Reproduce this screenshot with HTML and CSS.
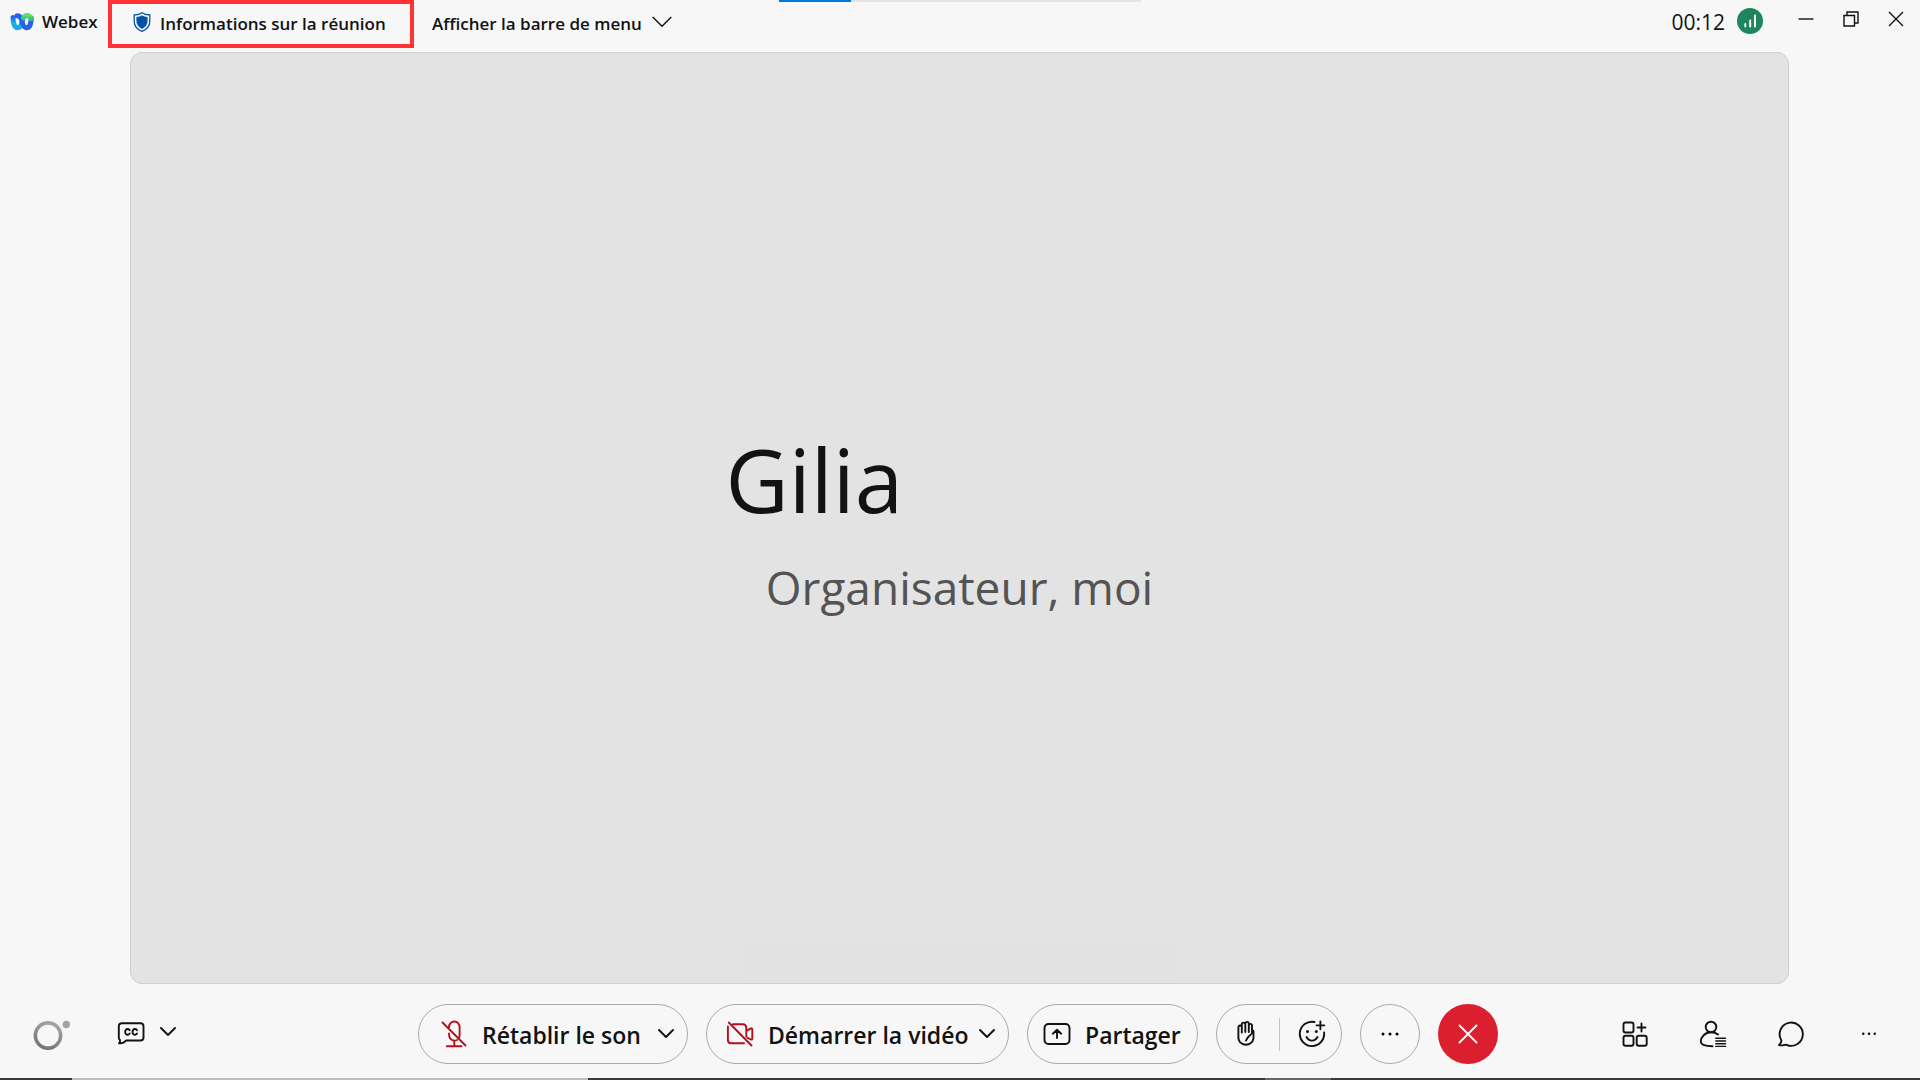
FILE: index.html
```
<!DOCTYPE html>
<html lang="fr">
<head>
    <meta charset="UTF-8">
    <meta name="viewport" content="width=device-width, initial-scale=1.0">
    <title>Webex</title>
    <link rel="stylesheet" href="styles.css">
</head>
<body>
    <div class="progress"><span class="progress-done"></span></div>

    <header>
        <div class="brand">
            <svg class="logo" width="24" height="20" viewBox="0 0 24 20">
                <defs>
                    <linearGradient id="gLeft" x1="0" y1="0" x2="0" y2="1">
                        <stop offset="0" stop-color="#2b62f0"/>
                        <stop offset="0.5" stop-color="#12b4e4"/>
                        <stop offset="1" stop-color="#22a8ee"/>
                    </linearGradient>
                    <linearGradient id="gRight" x1="0" y1="0" x2="0" y2="1">
                        <stop offset="0" stop-color="#5fe05f"/>
                        <stop offset="1" stop-color="#3cc47a"/>
                    </linearGradient>
                </defs>
                <path d="M3 5.500C3 11.500 4.800 15.800 7.600 15.800S12 11 12.500 8" fill="none" stroke="url(#gLeft)" stroke-width="5" stroke-linecap="round"/>
                <path d="M21.200 6C21.200 12 19.400 15.800 16.500 15.800S12.500 12 11.500 7.500C10.800 4.600 9.500 3.700 7 3.700" fill="none" stroke="#2660ee" stroke-width="5" stroke-linecap="round"/>
                <path d="M13.500 6C14.500 4 15.500 3.500 17 3.500S20.300 4.500 20.900 6.500" fill="none" stroke="url(#gRight)" stroke-width="5" stroke-linecap="round"/>
            </svg>
            <span>Webex</span>
        </div>
        <button class="meeting-info">
            <svg width="18" height="20" viewBox="0 0 18 20">
                <path d="M9 0.800C11 2.400 13.500 3 16.800 3V9C16.800 14 13.500 17.500 9 19.400C4.500 17.500 1.200 14 1.200 9V3C4.500 3 7 2.400 9 0.800Z" fill="#fff" stroke="#0353a8" stroke-width="1.300"/>
                <path d="M9 3.200C10.800 4.300 12.500 4.800 14.600 4.900V9C14.600 12.600 12.400 15.300 9 17C5.600 15.300 3.400 12.600 3.400 9V4.900C5.500 4.800 7.200 4.300 9 3.200Z" fill="#0353a8"/>
            </svg>
            Informations sur la réunion
        </button>
        <button class="menu-toggle">
            Afficher la barre de menu
            <svg width="20" height="12" viewBox="0 0 20 12"><path d="M0.700 1L10 10.300L19.300 1"/></svg>
        </button>
        <div class="window-side">
            <span class="timer">00:12</span>
            <svg class="signal" width="26" height="26" viewBox="0 0 26 26">
                <circle cx="13" cy="13" r="13" fill="#1f855f"/>
                <path d="M8.300 16V18.500M13.200 12.500V18.500M18 7.500V18.500" stroke="#fff" stroke-width="1.900" stroke-linecap="round"/>
            </svg>
            <button class="window-button" aria-label="Réduire">
                <svg width="16" height="16" viewBox="0 0 16 16"><path d="M0.500 8H15.500"/></svg>
            </button>
            <button class="window-button" aria-label="Restaurer">
                <svg width="16" height="16" viewBox="0 0 16 16"><path d="M1 4.500H11.500V15H1ZM4 4.500V1H15V12H11.500"/></svg>
            </button>
            <button class="window-button" aria-label="Fermer">
                <svg width="16" height="16" viewBox="0 0 16 16"><path d="M1 1L15 15M15 1L1 15"/></svg>
            </button>
        </div>
    </header>

    <main>
        <div class="participant">
            <h1>Gilia</h1>
            <p>Organisateur, moi</p>
        </div>
        <div class="name-strip"></div>
    </main>

    <footer>
        <div class="left-tools">
            <button aria-label="Assistant">
                <svg width="38" height="34" viewBox="0 0 38 34">
                    <defs>
                        <linearGradient id="gRing" x1="0.700" y1="0" x2="0.300" y2="1">
                            <stop offset="0" stop-color="#a5a5a5"/>
                            <stop offset="1" stop-color="#757575"/>
                        </linearGradient>
                    </defs>
                    <circle cx="15" cy="18.500" r="12.600" fill="none" stroke="url(#gRing)" stroke-width="3.600"/>
                    <circle cx="33.300" cy="7.500" r="3.700" fill="#a3a3a3"/>
                </svg>
            </button>
            <div class="captions">
                <button aria-label="Sous-titres">
                    <svg class="line" width="28" height="28" viewBox="0 0 28 28">
                        <path d="M5 3.300H23.500Q26.500 3.300 26.500 6.300V17.500Q26.500 20.500 23.500 20.500H9C7.500 22.500 5 23.600 2 23.300C3 22.300 3.300 21.300 3 20Q1.800 19 1.800 17.500V6.300Q1.800 3.300 5 3.300Z"/>
                        <path d="M12.700 10.200A2.500 2.900 0 1 0 12.700 13.600M20 10.200A2.500 2.900 0 1 0 20 13.600"/>
                    </svg>
                </button>
                <button aria-label="Options des sous-titres">
                    <svg class="line" width="16" height="10" viewBox="0 0 16 10"><path d="M1 1L8 8L15 1"/></svg>
                </button>
            </div>
        </div>

        <div class="controls">
            <div class="pill audio">
                <button class="red">
                    <svg class="line" width="28" height="28" viewBox="0 0 28 28">
                        <path d="M2.500 2.500L25.500 25.500M9 7.500V6.800A5.300 5.300 0 0 1 19.600 6.800V15.500Q19.600 17.500 18.500 18.500M9 13.500C9 17 10.500 20 13.500 20.500C15 20.800 16 20.500 17 20M14.300 21V26M6.800 26.200H21.500"/>
                    </svg>
                    <span>Rétablir le son</span>
                </button>
                <button aria-label="Options audio">
                    <svg class="line" width="16" height="10" viewBox="0 0 16 10"><path d="M1 1L8 8L15 1"/></svg>
                </button>
            </div>
            <div class="pill video">
                <button class="red">
                    <svg class="line" width="28" height="28" viewBox="0 0 28 28">
                        <path d="M2.800 2.500L25.500 25.500M7 4.200H16.500Q20.300 4.200 20.300 8V16.500M1.900 6.500V20Q1.900 23.300 5.200 23.300H18M20.500 10.800L25 8.400Q26.300 8 26.300 9.500V18.500Q26.300 20 25 19.500L21.500 17.800"/>
                    </svg>
                    <span>Démarrer la vidéo</span>
                </button>
                <button aria-label="Options vidéo">
                    <svg class="line" width="16" height="10" viewBox="0 0 16 10"><path d="M1 1L8 8L15 1"/></svg>
                </button>
            </div>
            <div class="pill share">
                <button>
                    <svg class="line" width="28" height="28" viewBox="0 0 28 28">
                        <rect x="1.500" y="4" width="25" height="20" rx="4"/>
                        <path d="M14 18V10M9.800 13.700L14 9.700L18.200 13.700"/>
                    </svg>
                    <span>Partager</span>
                </button>
            </div>
            <div class="pill reactions">
                <button aria-label="Lever la main">
                    <svg class="line" width="28" height="28" viewBox="0 0 28 28">
                        <path d="M9.800 12.500V4A1.800 1.800 0 0 1 13.300 4V12M13.300 12V3.300A1.800 1.800 0 0 1 16.800 3.300V12M16.800 12V5A1.700 1.700 0 0 1 20 5V12.500M9.800 6.500A1.800 1.800 0 0 0 6.400 7.200V18.500A7.700 7.700 0 0 0 21.500 18.500V11.500Q21 9.800 20 10.500V13C19 15.500 15.500 16 14 20.500"/>
                    </svg>
                </button>
                <span class="divider"></span>
                <button aria-label="Réactions">
                    <svg class="line" width="28" height="28" viewBox="0 0 28 28">
                        <path d="M16.500 2A12.200 12.200 0 1 0 26.100 12.500M22.400 1.500V9.300M18.500 5.400H26.300M8.500 17C11 21.800 17 21.800 19.500 17"/>
                        <circle class="dot" cx="9.500" cy="11.500" r="1.500"/>
                        <circle class="dot" cx="18.300" cy="11.500" r="1.500"/>
                    </svg>
                </button>
            </div>
            <button class="round" aria-label="Plus d'options">
                <svg width="18" height="4" viewBox="0 0 18 4">
                    <circle cx="2" cy="2" r="1.500"/><circle cx="9" cy="2" r="1.500"/><circle cx="16" cy="2" r="1.500"/>
                </svg>
            </button>
            <button class="round leave" aria-label="Quitter">
                <svg width="20" height="20" viewBox="0 0 20 20"><path d="M1.500 1.500L18.500 18.500M18.500 1.500L1.500 18.500"/></svg>
            </button>
        </div>

        <div class="right-tools">
            <button aria-label="Applications">
                <svg class="line" width="28" height="28" viewBox="0 0 28 28">
                    <rect x="2.500" y="2.500" width="10" height="10" rx="2"/>
                    <rect x="2.500" y="15.700" width="10" height="10" rx="2"/>
                    <rect x="15.700" y="15.700" width="10" height="10" rx="2"/>
                    <path d="M20.500 3.500V11.500M16.500 7.500H24.500"/>
                </svg>
            </button>
            <button aria-label="Participants">
                <svg class="line" width="28" height="28" viewBox="0 0 28 28">
                    <circle cx="12" cy="7" r="5.300"/>
                    <path d="M19 14.500C17 13 14.500 12.300 12 12.300C6 12.300 1.800 17 1.800 21.500C1.800 24.500 4.500 26.200 13.500 26.300"/>
                    <path class="thin" d="M16.800 18.200H26.500M16.800 21H26.500M16.800 23.700H26.500M16.800 26.400H26.500"/>
                </svg>
            </button>
            <button aria-label="Discussion">
                <svg class="line" width="28" height="28" viewBox="0 0 28 28">
                    <path d="M4.300 20.200A11.600 11.600 0 1 1 9.500 24.800C7 24.500 5 26.200 2 25C3.800 23.500 4.600 22 4.300 20.200Z"/>
                </svg>
            </button>
            <button aria-label="Autres panneaux">
                <svg width="28" height="28" viewBox="0 0 28 28">
                    <circle cx="8.300" cy="13.700" r="1.200"/><circle cx="14" cy="13.700" r="1.200"/><circle cx="19.700" cy="13.700" r="1.200"/>
                </svg>
            </button>
        </div>
    </footer>
    <div class="taskbar-edge"></div>
</body>
</html>
```
FILE: styles.css
```
* {
    box-sizing: border-box;
}

body {
    margin: 0;
    height: 100vh;
    display: flex;
    flex-direction: column;
    background-color: #f7f7f7;
    color: #121212;
    font-family: "Open Sans", "Noto Sans", sans-serif;
    overflow: hidden;
}

button {
    display: flex;
    align-items: center;
    padding: 0;
    border: none;
    background: none;
    color: inherit;
    font: inherit;
    white-space: nowrap;
    cursor: pointer;
}

svg {
    display: block;
    flex: none;
}

.line {
    fill: none;
    stroke: #121212;
    stroke-width: 1.9;
    stroke-linecap: round;
    stroke-linejoin: round;
}

.line .thin {
    stroke-width: 1.4;
}

.line .dot {
    fill: #121212;
    stroke: none;
}

/* thin loading bar over the top edge */
.progress {
    position: absolute;
    top: 0;
    left: 50%;
    width: 362px;
    height: 2px;
    margin-left: -181px;
    background-color: #e4e4e4;
}

.progress-done {
    display: block;
    width: 20%;
    height: 100%;
    background-color: #0078d7;
}

header {
    display: flex;
    align-items: flex-start;
    height: 52px;
    font-size: 17px;
    font-weight: 600;
    line-height: 24px;
}

.brand {
    display: flex;
    align-items: center;
    gap: 8px;
    width: 108px;
    padding: 10px 0 0 10px;
}

.meeting-info {
    gap: 9px;
    width: 306px;
    height: 48px;
    padding-left: 21px;
    border: 4px solid #ff3333;
}

.meeting-info svg {
    margin-bottom: 4px;
}

.menu-toggle {
    gap: 10px;
    height: 48px;
    padding-left: 18px;
}

.menu-toggle svg {
    margin-bottom: 4px;
    fill: none;
    stroke: #121212;
    stroke-width: 1.4;
}

.window-side {
    display: flex;
    align-items: center;
    height: 38px;
    margin-left: auto;
    padding-right: 16px;
}

.timer {
    padding-top: 6px;
    font-size: 21px;
    font-weight: 400;
}

.signal {
    margin: 4px 35px 0 12px;
}

.window-button + .window-button {
    margin-left: 29px;
}

.window-button svg {
    fill: none;
    stroke: #121212;
    stroke-width: 1.4;
}

main {
    flex: 1;
    display: flex;
    flex-direction: column;
    align-items: center;
    margin: 0 131px 0 130px;
    border: 1px solid #cfcfcf;
    border-radius: 12px;
    background-color: #e3e3e3;
}

.participant {
    flex: 1;
    width: 468px;
    display: flex;
    flex-direction: column;
    justify-content: center;
    padding-top: 56px;
}

h1 {
    margin: 0;
    font-size: 87px;
    font-weight: 400;
    line-height: 120px;
}

.participant p {
    margin: 0;
    color: #545454;
    font-size: 46px;
    line-height: 96px;
    text-align: center;
}

.name-strip {
    width: 436px;
    height: 33px;
    margin-bottom: 6px;
    background-color: #e2e2e2;
}

footer {
    display: grid;
    grid-template-columns: 1fr auto 1fr;
    align-items: center;
    padding: 20px 37px 14px 33px;
}

.left-tools {
    display: flex;
    align-items: center;
    gap: 46px;
}

.captions {
    display: flex;
    align-items: center;
    gap: 15px;
}

.captions button + button {
    margin-bottom: 4px;
}

.controls {
    display: flex;
    gap: 18px;
}

.pill {
    display: flex;
    align-items: center;
    justify-content: space-between;
    height: 60px;
    padding: 0 13px;
    border: 1px solid #aaa;
    border-radius: 30px;
    font-size: 23px;
    font-weight: 600;
}

.pill button {
    gap: 14px;
}

.pill button span {
    padding-top: 2px;
}

.red svg {
    stroke: #b80d1c;
}

.audio {
    width: 270px;
    padding-left: 21px;
}

.video {
    width: 303px;
    padding-left: 19px;
}

.share {
    width: 171px;
    padding-left: 15px;
}

.reactions {
    width: 126px;
    padding: 0 15px;
}

.divider {
    width: 1px;
    height: 33px;
    background-color: #c4c4c4;
}

.round {
    justify-content: center;
    width: 60px;
    height: 60px;
    border: 1px solid #aaa;
    border-radius: 50%;
}

.leave {
    border: none;
    background-color: #db1f2f;
}

.leave svg {
    stroke: #fff;
    stroke-width: 1.8;
    stroke-linecap: round;
}

.right-tools {
    display: flex;
    justify-content: flex-end;
    gap: 50px;
}

.taskbar-edge {
    height: 2px;
    background: linear-gradient(to right, #3b3838 72px, #bdbdbd 72px, #bdbdbd 588px, #3b3838 588px, #3b3838 1265px, #666 1265px, #666 1331px, #3b3838 1331px);
}
```
